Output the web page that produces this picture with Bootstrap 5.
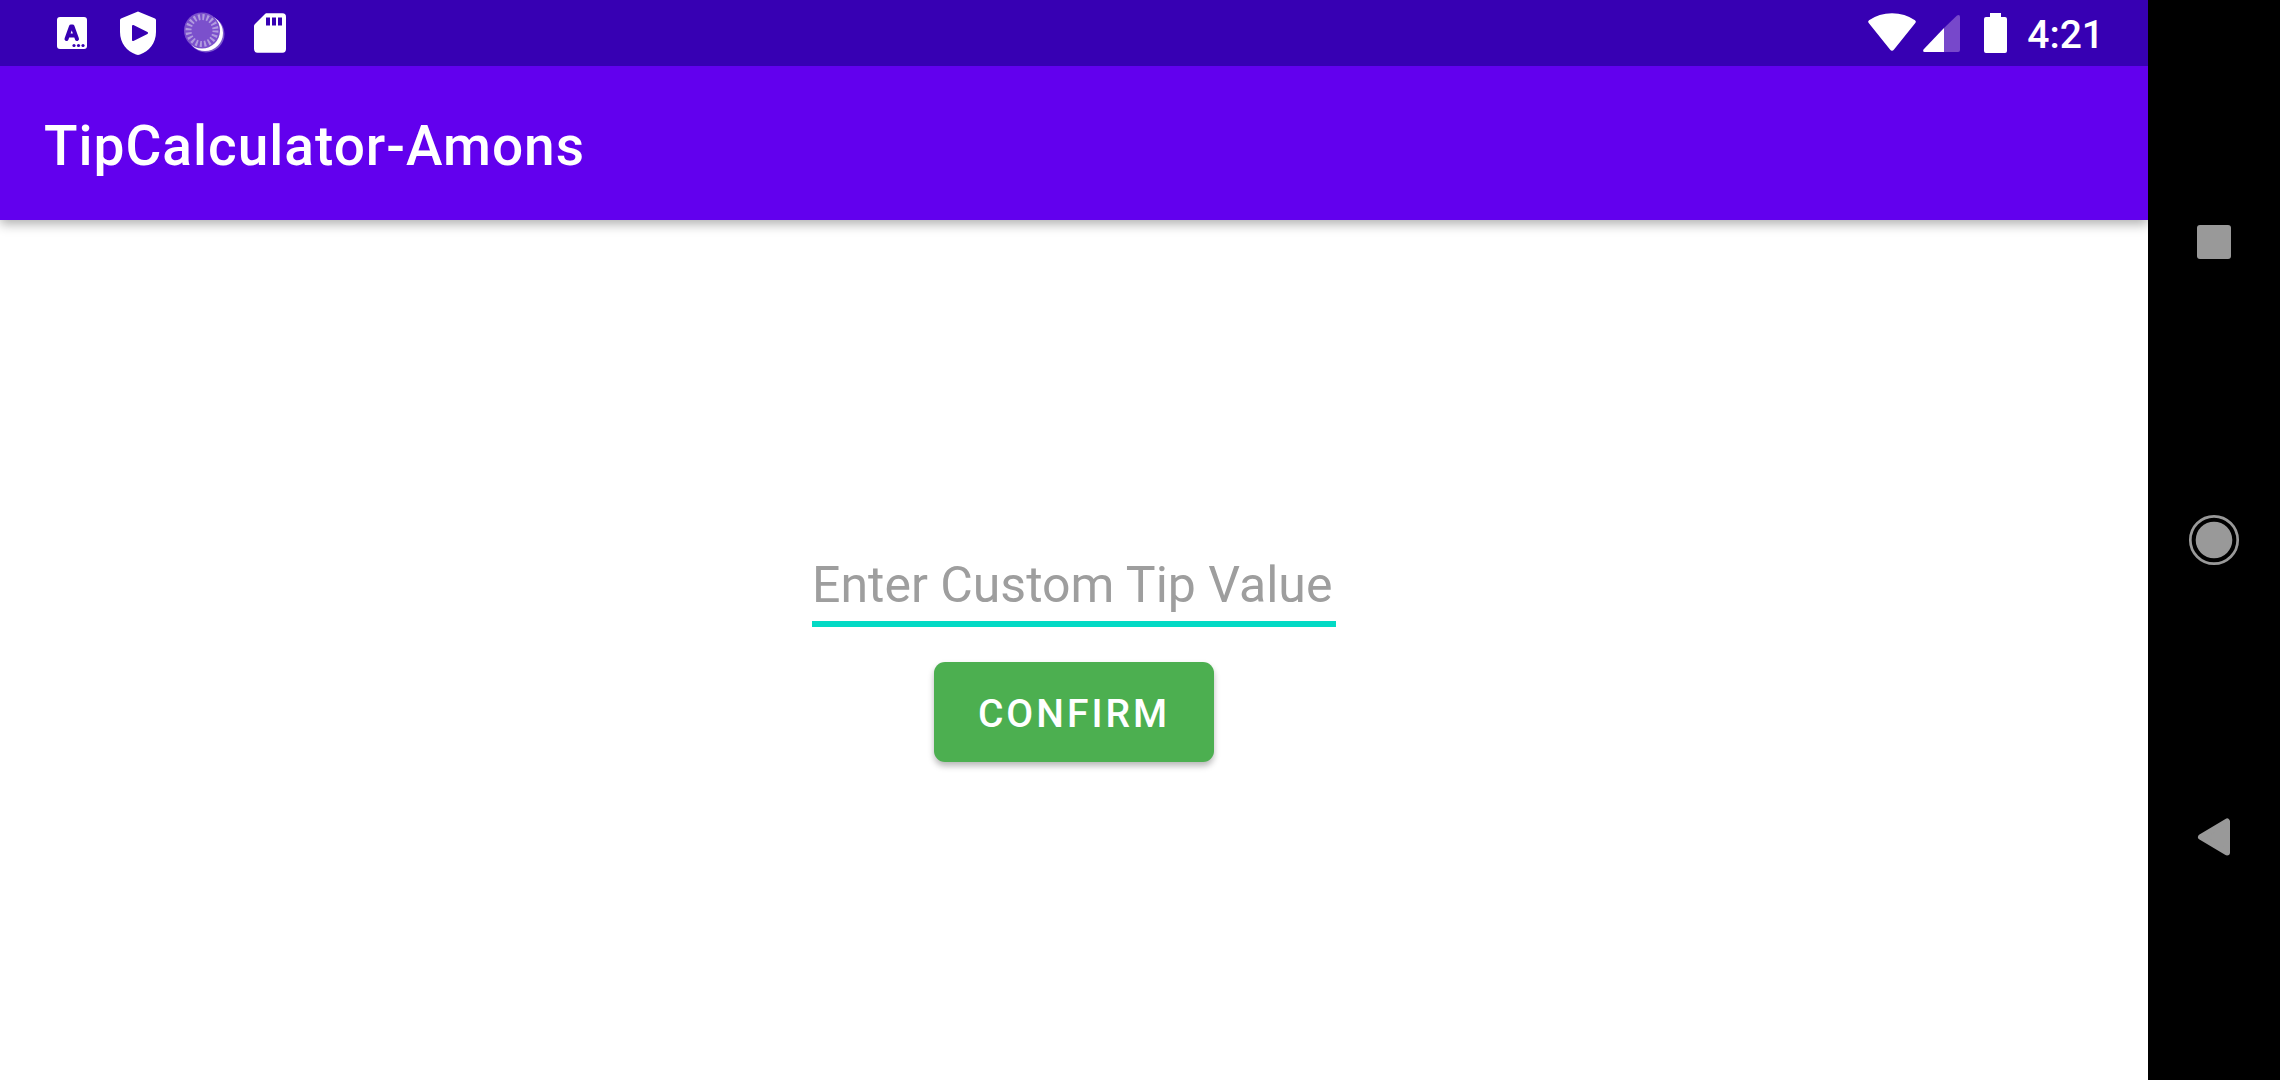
<!DOCTYPE html>
<html lang="en">
<head>
<meta charset="utf-8">
<meta name="viewport" content="width=device-width, initial-scale=1">
<title>TipCalculator-Amons</title>
<link href="https://cdn.jsdelivr.net/npm/bootstrap@5.3.0/dist/css/bootstrap.min.css" rel="stylesheet">
<style>
  body { font-family: Roboto, "Noto Sans", sans-serif; background: #fff; }
  .status-bar { height: 66px; padding: 0 44px 0 39px; background: #3700b3; color: #fff; }
  .status-icon { width: 66px; height: 66px; display: block; }
  .status-right { gap: 6px; }
  .status-clock { font-size: 39px; line-height: 46px; font-weight: 500; padding: 3px 0 0 14px; }
  .battery-icon { margin-left: 17px; }
  .app-bar { height: 154px; padding: 0 44px; background: #6200ee; color: #fff; box-shadow: 0 4px 11px rgba(0,0,0,.32); }
  .app-title { font-size: 55px; line-height: 64px; font-weight: 500; letter-spacing: 1px; margin: 0; padding-top: 6px; }
  .tip-form { gap: 35px; }
  .tip-field { width: 524px; padding: 17px 0 6px; border: 0; border-bottom: 6px solid #03dac5; border-radius: 0; font-size: 50px; line-height: 60px; color: #212121; }
  .tip-field:focus { box-shadow: none; border-color: #03dac5; }
  .tip-field::placeholder { color: #9e9e9e; opacity: 1; }
  .confirm-btn { height: 100px; padding: 4px 44px 0; border: 0; border-radius: 11px; background: #4caf50; color: #fff; font-size: 39px; line-height: 46px; font-weight: 500; letter-spacing: 3px; box-shadow: 0 4px 6px rgba(0,0,0,.28); }
  .confirm-btn:hover { background: #43a047; color: #fff; }
  .nav-rail { width: 132px; background: #000; }
  .rail-btn { flex: 0 0 27.6%; border: 0; background: none; padding: 0; }
</style>
<script src="https://cdn.jsdelivr.net/npm/bootstrap@5.3.0/dist/js/bootstrap.bundle.min.js"></script>
</head>
<body>
<div class="d-flex min-vh-100">
  <div class="d-flex flex-column flex-grow-1">
    <div class="status-bar position-relative z-1 d-flex align-items-center justify-content-between">
      <div class="d-flex">
        <svg class="status-icon" viewBox="0 0 66 66" aria-hidden="true">
          <rect x="18" y="17" width="30" height="32" rx="3" fill="#fff"/>
          <path d="M27.500 39L32 26.500h1.500L38 39M29.500 35.500h6.500" fill="none" stroke="#3700b3" stroke-width="4" stroke-linecap="round" stroke-linejoin="round"/>
          <g fill="#3700b3"><circle cx="35" cy="45.500" r="1.600"/><circle cx="39.500" cy="45.500" r="1.600"/><circle cx="44" cy="45.500" r="1.600"/></g>
        </svg>
        <svg class="status-icon" viewBox="0 0 66 66" aria-hidden="true">
          <path d="M33 11.500L50 18.500Q51 19 51 20V32C51 43 44 51.500 35 54.500Q33 55.300 31 54.500C22 51.500 15 43 15 32V20Q15 19 16 18.500Z" fill="#fff"/>
          <path d="M28 26L42 33L28 40Z" fill="#3700b3" stroke="#3700b3" stroke-width="2" stroke-linejoin="round"/>
        </svg>
        <svg class="status-icon" viewBox="0 0 66 66" aria-hidden="true">
          <circle cx="35" cy="34" r="18.500" fill="#fff" opacity=".35"/>
          <circle cx="34" cy="33" r="18" fill="#fff"/>
          <circle cx="31" cy="30.500" r="18" fill="#7b50cc"/>
          <circle cx="31" cy="30.500" r="13.500" fill="none" stroke="#b19bdf" stroke-width="6" stroke-dasharray="2 2.241"/>
        </svg>
        <svg class="status-icon" viewBox="0 0 66 66" aria-hidden="true">
          <path d="M29 13.300H45.500Q49 13.300 49 17V49Q49 52.700 45.500 52.700H20.500Q17 52.700 17 49V26Q17 25 18 24L28 14Z" fill="#fff"/>
          <path d="M29 17.500h4v8h-4zM35 17.500h4v8h-4zM41 17.500h4v8h-4z" fill="#3700b3"/>
        </svg>
      </div>
      <div class="status-right d-flex align-items-center">
        <svg width="50" height="66" viewBox="0 0 50 66" role="img" aria-label="Wi-Fi">
          <path d="M1.500 22.800Q.5 21.300 2 20.300Q12 13.200 25 13.200T48 20.300Q49.500 21.300 48.500 22.800L27 49.500Q25 52 23 49.500Z" fill="#fff"/>
        </svg>
        <svg width="38" height="66" viewBox="0 0 38 66" role="img" aria-label="Mobile signal">
          <path d="M21 28L34 15.500Q37 14 37 17V50Q37 52 35 52H21Z" fill="#7748cb"/>
          <path d="M21 28V52H1.500Q-.5 52 .5 49.500Z" fill="#fff"/>
        </svg>
        <svg class="battery-icon" width="23" height="66" viewBox="0 0 23 66" role="img" aria-label="Battery">
          <path d="M6 13H17V17H21Q23 17 23 19V51Q23 53 21 53H2Q0 53 0 51V19Q0 17 2 17H6Z" fill="#fff"/>
        </svg>
        <span class="status-clock">4:21</span>
      </div>
    </div>
    <header class="app-bar d-flex align-items-center">
      <h1 class="app-title">TipCalculator-Amons</h1>
    </header>
    <main class="flex-grow-1 d-flex align-items-center justify-content-center">
      <form class="tip-form d-flex flex-column align-items-center" onsubmit="return false">
        <input class="tip-field form-control bg-transparent" type="text" inputmode="decimal" aria-label="Enter Custom Tip Value" placeholder="Enter Custom Tip Value">
        <button class="confirm-btn btn text-uppercase" type="submit">Confirm</button>
      </form>
    </main>
  </div>
  <nav class="nav-rail position-relative z-1 d-flex flex-column justify-content-center flex-shrink-0" aria-label="System navigation">
    <button class="rail-btn" type="button" aria-label="Recent apps">
      <svg width="60" height="60" viewBox="0 0 60 60"><rect x="13" y="13" width="34" height="34" rx="3" fill="#999"/></svg>
    </button>
    <button class="rail-btn" type="button" aria-label="Home">
      <svg width="60" height="60" viewBox="0 0 60 60"><circle cx="30" cy="30" r="18.300" fill="#999"/><circle cx="30" cy="30" r="23.700" fill="none" stroke="#999" stroke-width="2.700"/></svg>
    </button>
    <button class="rail-btn" type="button" aria-label="Back">
      <svg width="60" height="60" viewBox="0 0 60 60"><path d="M17 29L43 13.500V44.500Z" fill="#999" stroke="#999" stroke-width="6" stroke-linejoin="round"/></svg>
    </button>
  </nav>
</div>
</body>
</html>
